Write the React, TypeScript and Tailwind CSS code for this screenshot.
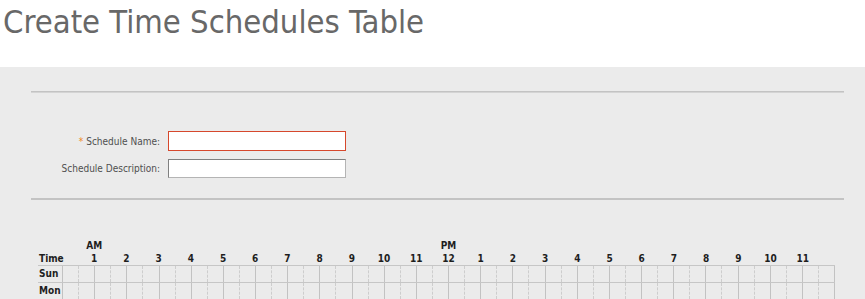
import React from "react";

const FONT = "font-['DejaVu_Sans_Condensed','DejaVu_Sans',sans-serif]";

const hours = [1, 2, 3, 4, 5, 6, 7, 8, 9, 10, 11, 12, 1, 2, 3, 4, 5, 6, 7, 8, 9, 10, 11];
const days = ["Sun", "Mon"];
const cells = Array.from({ length: 48 }, (_, i) => i);

export default function App() {
  return (
    <div className={`min-h-screen bg-white ${FONT}`}>
      <div className="h-[67px] pl-[3px] pt-[6px]">
        <h1 className="text-[32.5px] leading-[33px] text-[#686868] font-normal">Create Time Schedules Table</h1>
      </div>
      <div className="bg-[#ebebeb] pt-[24px] min-h-[232px]">
        <div className="ml-[31px] w-[813px] border-t border-b border-t-[#c3c3c3] border-b-[#d4d4d4] h-[2px]" />
        <div className="ml-[31px] mt-[38px] flex flex-col gap-[8px]">
          <div className="flex items-center gap-[8px]">
            <div className="w-[129px] text-right text-[10px] text-[#4f4f4f]">
              <span className="text-[#f08a24] mr-[3px]">*</span>Schedule Name:
            </div>
            <div className="w-[178px] h-[20px] bg-white border border-[#d6482c]" />
          </div>
          <div className="flex items-center gap-[8px]">
            <div className="w-[129px] text-right text-[10px] text-[#4f4f4f]">Schedule Description:</div>
            <div className="w-[178px] h-[19px] bg-white border border-[#808080] border-r-[#b4b4b4] border-b-[#b4b4b4]" />
          </div>
        </div>
        <div className="ml-[31px] mt-[20px] w-[813px] h-[2px] bg-[#c3c3c3]" />

        <div className="ml-[38px] mt-[39px] text-[10px] font-bold text-[#1e1e1e]">
          <div className="flex h-[13px] leading-[13px]">
            <div className="w-[24px]" />
            <div className="grid w-[773px] grid-cols-[repeat(48,minmax(0,1fr))]">
              <div className="text-center" style={{ gridColumn: "2 / span 2" }}>AM</div>
              <div className="text-center" style={{ gridColumn: "24 / span 2" }}>PM</div>
            </div>
          </div>
          <div className="flex h-[13px] leading-[13px]">
            <div className="w-[24px] pl-[1px]">Time</div>
            <div className="grid w-[773px] grid-cols-[repeat(48,minmax(0,1fr))]">
              {hours.map((h, k) => (
                <div key={k} className="text-center" style={{ gridColumn: `${2 * (k + 1)} / span 2` }}>
                  {h}
                </div>
              ))}
            </div>
          </div>
          {days.map((d) => (
            <div key={d} className="flex h-[17px] border-t border-[#c6c6c6] w-[797px]">
              <div className="w-[24px] pl-[1px] leading-[16px]">{d}</div>
              <div className="grid w-[773px] grid-cols-[repeat(48,minmax(0,1fr))] border-l border-[#c2c2c2]">
                {cells.map((i) =>
                  i % 2 === 0 ? (
                    <div key={i} className="border-r border-dashed border-[#cdcdcd]" />
                  ) : (
                    <div key={i} className="border-r border-[#c2c2c2]" />
                  )
                )}
              </div>
            </div>
          ))}
        </div>
      </div>
    </div>
  );
}
